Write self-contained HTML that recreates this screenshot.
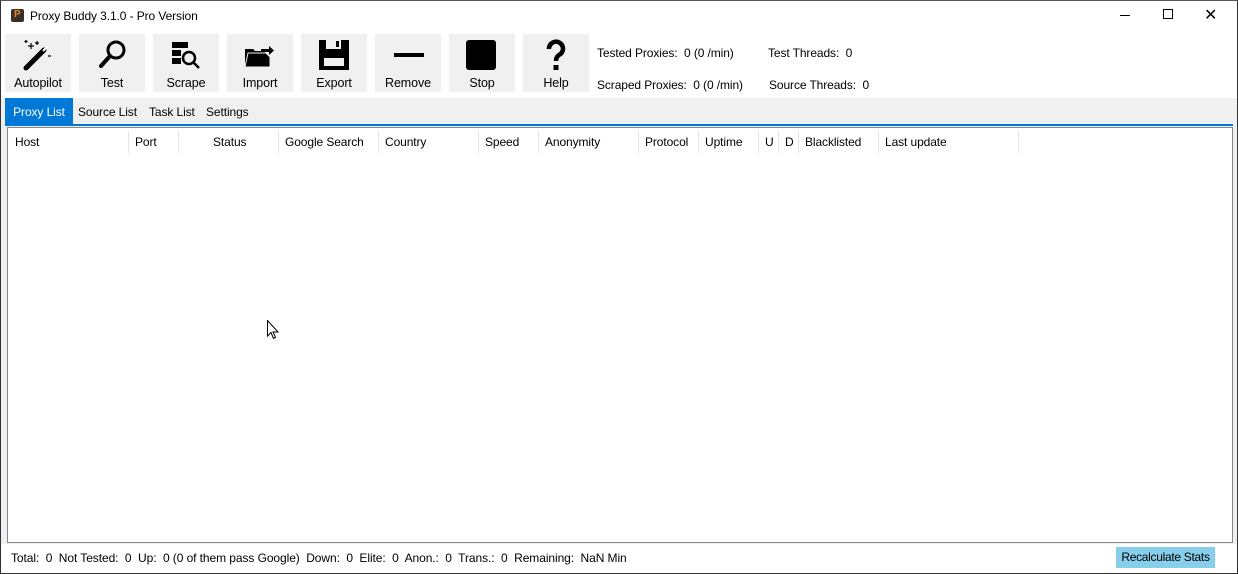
<!DOCTYPE html>
<html><head><style>
*{margin:0;padding:0;box-sizing:border-box}
body{width:1238px;height:574px;overflow:hidden;background:#fff;font-family:"Liberation Sans",sans-serif;font-size:12px;color:#000;position:relative;letter-spacing:-0.1px}
.a{position:absolute;white-space:nowrap}
.win{position:absolute;left:0;top:0;width:1238px;height:574px;border:1px solid #333;border-top-color:#555}
.btn{position:absolute;top:34px;width:66px;height:58px;background:#f0f0f0}
.btn span{position:absolute;left:0;right:0;bottom:2px;text-align:center;font-size:12.5px}
.btn svg{position:absolute;left:17px;top:5px}
.col{position:absolute;top:131px;height:22px;border-left:1px solid #e5e5e5}
</style></head><body>
<div class="win"></div>
<div class="a" style="left:11px;top:9px;width:13px;height:13px;background:#3a2e28;border-radius:2px"><div style="color:#e08a2a;font-size:10px;font-weight:bold;position:absolute;left:3px;top:0">P</div></div>
<div class="a" style="left:30px;top:9px">Proxy Buddy 3.1.0 - Pro Version</div>
<div class="a" style="left:1120px;top:15px;width:10px;height:1px;background:#000"></div>
<div class="a" style="left:1163px;top:9px;width:10px;height:10px;border:1px solid #000"></div>
<div class="a" style="left:1204px;top:5px;font-size:16px;font-weight:300">✕</div>
<div class="btn" style="left:5px"><svg width="32" height="32" viewBox="0 0 32 32"><path d="M4 29 L22 11" stroke="#000" stroke-width="5" stroke-linecap="round"/><path d="M21 12 L25 8" stroke="#fff" stroke-width="2"/><path d="M9 4v6M6 7h6M15 2v4M13 4h4M4 1v3M2.5 2.5h3M26 17h3" stroke="#000" stroke-width="1.2"/></svg><span>Autopilot</span></div>
<div class="btn" style="left:79px"><svg width="32" height="32" viewBox="0 0 32 32"><circle cx="20" cy="11" r="8" fill="none" stroke="#000" stroke-width="3"/><path d="M14 17 L5 27" stroke="#000" stroke-width="4" stroke-linecap="round"/></svg><span>Test</span></div>
<div class="btn" style="left:153px"><svg width="32" height="32" viewBox="0 0 32 32"><rect x="2" y="3" width="16" height="6" fill="#000"/><rect x="2" y="11" width="9" height="6" fill="#000"/><rect x="2" y="19" width="9" height="6" fill="#000"/><circle cx="19" cy="19" r="6" fill="none" stroke="#000" stroke-width="2.5"/><path d="M23 23 L29 29" stroke="#000" stroke-width="2.5"/></svg><span>Scrape</span></div>
<div class="btn" style="left:227px"><svg width="32" height="32" viewBox="0 0 32 32"><path d="M1 10h8l2 2h10v16H1z" fill="#000"/><path d="M4 14h18l4 4v10H1z" fill="#000" stroke="#f0f0f0" stroke-width="1"/><path d="M17 10h8v-3l5 4.5-5 4.5v-3h-8z" fill="#000"/></svg><span>Import</span></div>
<div class="btn" style="left:301px"><svg width="32" height="32" viewBox="0 0 32 32"><path d="M1 1h30v30H1z" fill="#000"/><rect x="8" y="1" width="15" height="9" fill="#f0f0f0"/><rect x="18" y="2" width="3" height="6" fill="#000"/><rect x="6" y="19" width="20" height="8" fill="#f0f0f0"/></svg><span>Export</span></div>
<div class="btn" style="left:375px"><svg width="32" height="32" viewBox="0 0 32 32"><rect x="2" y="14" width="30" height="4" fill="#000"/></svg><span>Remove</span></div>
<div class="btn" style="left:449px"><svg width="32" height="32" viewBox="0 0 32 32"><rect x="0" y="1" width="30" height="30" rx="3" fill="#000"/></svg><span>Stop</span></div>
<div class="btn" style="left:523px"><svg width="32" height="32" viewBox="0 0 32 32"><path d="M9 10 A7 7 0 1 1 19 16 Q16 18 16 22" fill="none" stroke="#000" stroke-width="4.5"/><rect x="13.5" y="26" width="5" height="5" fill="#000"/></svg><span>Help</span></div>
<div class="a" style="left:597px;top:46px">Tested Proxies:&nbsp; 0 (0 /min)</div>
<div class="a" style="left:768px;top:46px">Test Threads:&nbsp; 0</div>
<div class="a" style="left:597px;top:78px">Scraped Proxies:&nbsp; 0 (0 /min)</div>
<div class="a" style="left:769px;top:78px">Source Threads:&nbsp; 0</div>
<div class="a" style="left:1px;top:98px;width:1236px;height:470px;background:#f0f0f0"></div>
<div class="a" style="left:5px;top:98px;width:68px;height:26px;background:#0078d7;color:#fff;text-align:center;line-height:28px">Proxy List</div>
<div class="a" style="left:78px;top:105px">Source List</div>
<div class="a" style="left:149px;top:105px">Task List</div>
<div class="a" style="left:206px;top:105px">Settings</div>
<div class="a" style="left:5px;top:124px;width:1228px;height:2px;background:#0078d7"></div>
<div class="a" style="left:7px;top:127px;width:1226px;height:416px;background:#fff;border:1px solid #828790"></div>
<div class="a" style="left:15px;top:135px">Host</div>
<div class="col" style="left:128px"></div><div class="a" style="left:135px;top:135px">Port</div>
<div class="col" style="left:178px"></div><div class="a" style="left:213px;top:135px">Status</div>
<div class="col" style="left:278px"></div><div class="a" style="left:285px;top:135px">Google Search</div>
<div class="col" style="left:378px"></div><div class="a" style="left:385px;top:135px">Country</div>
<div class="col" style="left:478px"></div><div class="a" style="left:485px;top:135px">Speed</div>
<div class="col" style="left:538px"></div><div class="a" style="left:545px;top:135px">Anonymity</div>
<div class="col" style="left:638px"></div><div class="a" style="left:645px;top:135px">Protocol</div>
<div class="col" style="left:698px"></div><div class="a" style="left:705px;top:135px">Uptime</div>
<div class="col" style="left:758px"></div><div class="a" style="left:765px;top:135px">U</div>
<div class="col" style="left:778px"></div><div class="a" style="left:785px;top:135px">D</div>
<div class="col" style="left:798px"></div><div class="a" style="left:805px;top:135px">Blacklisted</div>
<div class="col" style="left:878px"></div><div class="a" style="left:885px;top:135px">Last update</div>
<div class="col" style="left:1018px"></div>
<svg class="a" style="left:267px;top:320px" width="12" height="20" viewBox="0 0 12 20"><path d="M0.5 0.5V16l3.5-3.5 2.5 6 2-1-2.5-5.5H11z" fill="#fff" stroke="#000"/></svg>
<div class="a" style="left:1px;top:544px;width:1236px;height:24px;background:#fff"></div>
<div class="a" style="left:11px;top:551px;letter-spacing:-0.08px">Total:&nbsp; 0&nbsp; Not Tested:&nbsp; 0&nbsp; Up:&nbsp; 0 (0 of them pass Google)&nbsp; Down:&nbsp; 0&nbsp; Elite:&nbsp; 0&nbsp; Anon.:&nbsp; 0&nbsp; Trans.:&nbsp; 0&nbsp; Remaining:&nbsp; NaN Min</div>
<div class="a" style="left:1116px;top:547px;width:99px;height:21px;background:#87ceeb;text-align:center;line-height:21px;letter-spacing:-0.3px">Recalculate Stats</div>
</body></html>
